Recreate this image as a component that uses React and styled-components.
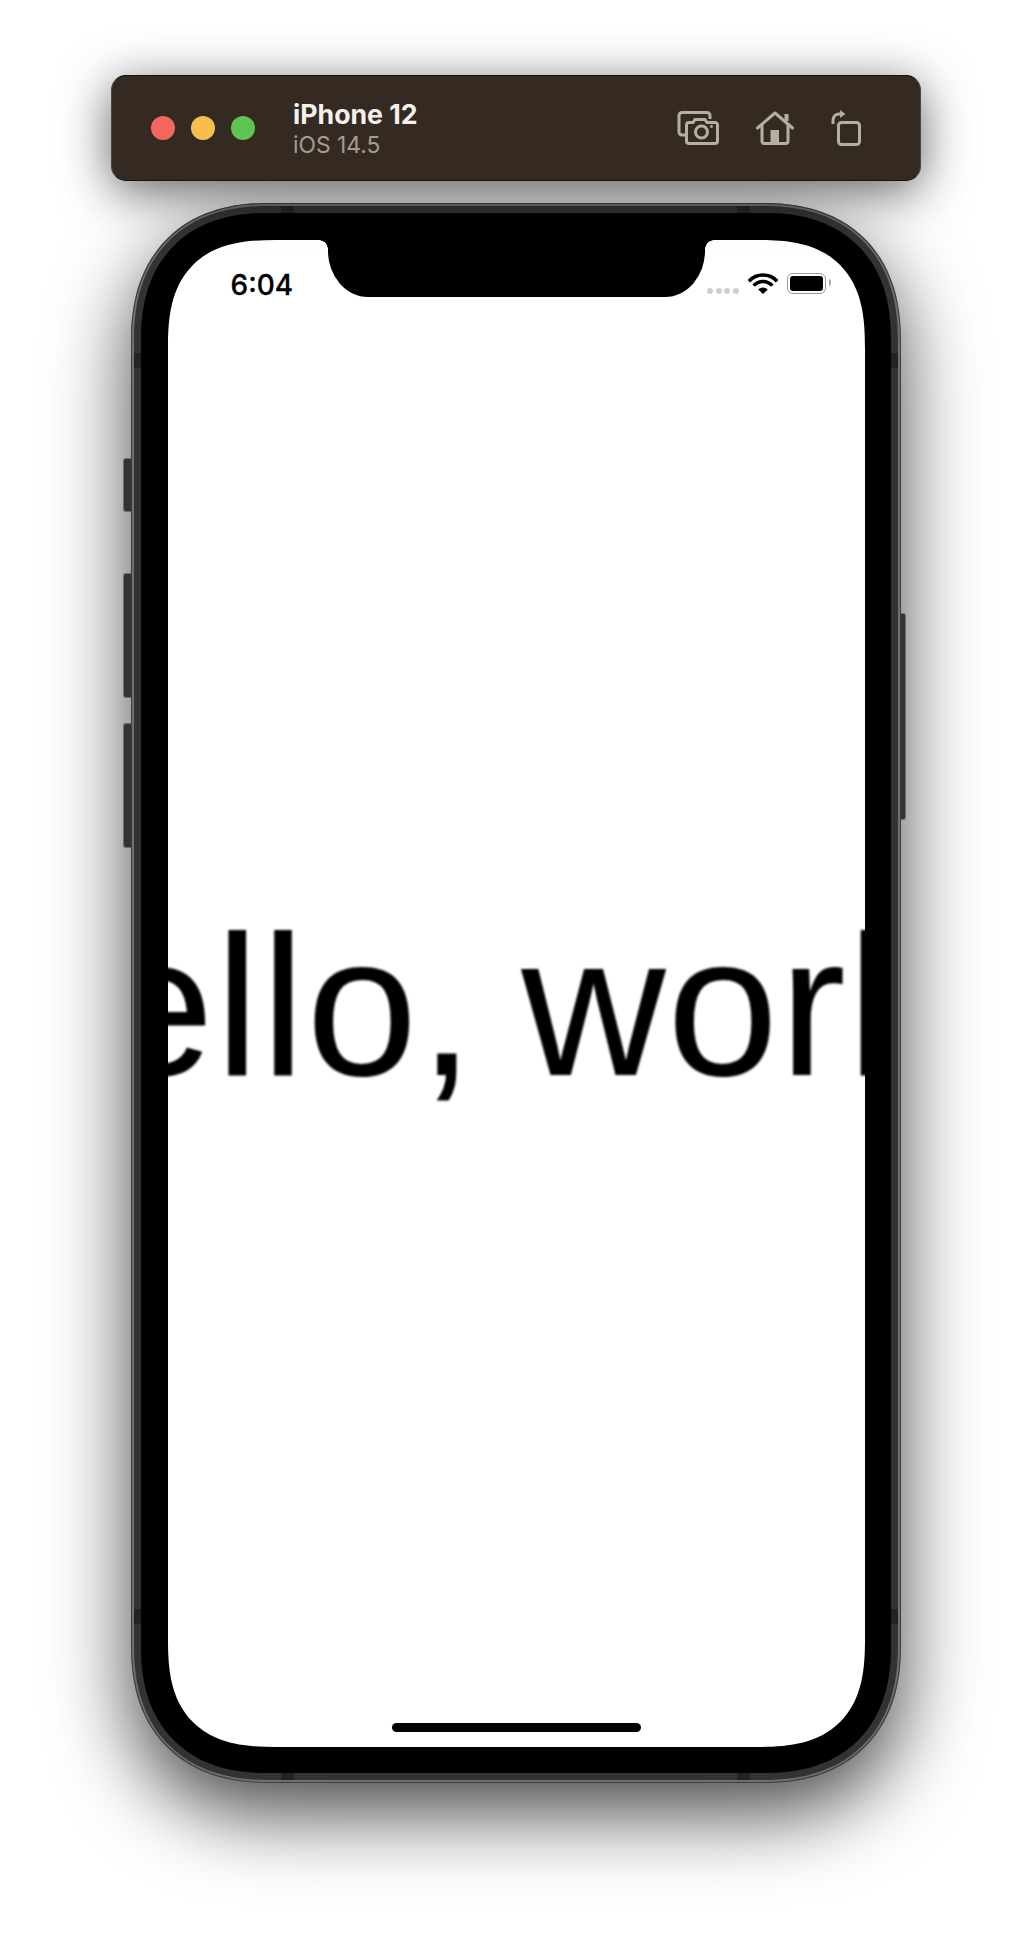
import React from 'react'
import styled, { createGlobalStyle } from 'styled-components'

const GlobalStyle = createGlobalStyle`
	html, body {
		margin: 0;
		padding: 0;
		background: #fff;
	}
`
const Page = styled.div`
	width: 1032px;
	height: 1936px;
	padding-top: 75px;
	box-sizing: border-box;
	display: flex;
	flex-direction: column;
	align-items: center;
	gap: 22px;
	overflow: hidden;
	font-family: Inter, "Liberation Sans", sans-serif;
`
const Toolbar = styled.div`
	width: 810px;
	height: 106px;
	box-sizing: border-box;
	padding: 0 59px 0 39px;
	display: flex;
	align-items: center;
	background: #342a21;
	border: 1px solid #4d463f;
	border-top-color: #15110d;
	border-bottom-color: #15110d;
	border-radius: 15px;
	box-shadow: 0 10px 50px rgba(0, 0, 0, 0.62);
	position: relative;
	z-index: 1;
`
const Lights = styled.div`
	display: flex;
	gap: 16px;
	margin-right: 38px;
`
const Light = styled.span`
	width: 24px;
	height: 24px;
	border-radius: 50%;
	background: ${p => p.color};
`
const Device = styled.div`
	flex: 1;
	display: flex;
	flex-direction: column;
	gap: 2px;
`
const DeviceName = styled.div`
	font-size: 26.7px;
	line-height: 32px;
	font-weight: 700;
	color: #f3f1ef;
`
const DeviceOs = styled.div`
	font-size: 22.8px;
	line-height: 26px;
	color: #a49c93;
`
const Actions = styled.div`
	display: flex;
	align-items: center;
	gap: 37px;
	color: #b6aea4;
`
const Phone = styled.div`
	position: relative;
	width: 770px;
	height: 1580px;
	flex: none;
	box-sizing: border-box;
	padding: 3px;
	background: #6f6f72;
	border-radius: 138px;
	corner-shape: superellipse(1.2);
	box-shadow: 0 30px 80px rgba(0, 0, 0, 0.72), inset 0 0 0 1px #3f3f3f;
`
const Band = styled.div`
	position: relative;
	height: 100%;
	box-sizing: border-box;
	padding: 7px;
	background: #333;
	border-radius: 134px;
	corner-shape: superellipse(1.2);
`
const Bezel = styled.div`
	height: 100%;
	box-sizing: border-box;
	padding: 26.5px;
	background: #000;
	border-radius: 126px;
	corner-shape: superellipse(1.2);
`
const Screen = styled.div`
	position: relative;
	height: 100%;
	display: flex;
	flex-direction: column;
	background: #fff;
	border-radius: 108px;
	corner-shape: superellipse(1.4);
	overflow: hidden;
`
const Notch = styled.div`
	position: absolute;
	top: 0;
	left: 160px;
	width: 377px;
	height: 57px;
	background: #000;
	border-radius: 0 0 40px 40px / 0 0 46px 46px;
	&::before, &::after {
		content: '';
		position: absolute;
		top: 0;
		width: 9px;
		height: 9px;
	}
	&::before {
		left: -9px;
		background: radial-gradient(circle at 0 100%, transparent 8.5px, #000 9px);
	}
	&::after {
		right: -9px;
		background: radial-gradient(circle at 100% 100%, transparent 8.5px, #000 9px);
	}
`
const StatusBar = styled.div`
	height: 88px;
	flex: none;
	box-sizing: border-box;
	padding: 0 39px 0 63px;
	display: flex;
	align-items: center;
`
const Time = styled.div`
	flex: 1;
	padding-top: 2px;
	font-size: 28px;
	font-weight: 500;
	-webkit-text-stroke: 0.3px #000;
	color: #000;
`
const Signal = styled.div`
	display: flex;
	gap: 2.4px;
	margin: 15px 9px 0 0;
`
const SignalDot = styled.span`
	width: 6px;
	height: 6px;
	border-radius: 50%;
	background: #cfcfcf;
`
const Battery = styled.div`
	width: 39px;
	height: 21px;
	margin-left: 9px;
	box-sizing: border-box;
	padding: 2px;
	border: 1.5px solid #999;
	border-radius: 6px;
	position: relative;
	&::after {
		content: '';
		position: absolute;
		right: -6px;
		top: 5px;
		width: 2px;
		height: 7px;
		border-radius: 0 2px 2px 0;
		background: #aaa;
	}
`
const BatteryFill = styled.div`
	height: 100%;
	background: #000;
	border-radius: 3px;
`
const Message = styled.div`
	flex: 1;
	display: flex;
	align-items: center;
	justify-content: center;
	padding: 0 13px 38px 0;
	overflow: hidden;
`
const Hello = styled.div`
	flex: none;
	font-family: "Liberation Sans", Arial, sans-serif;
	font-size: 200px;
	letter-spacing: 1.2px;
	word-spacing: -11px;
	white-space: nowrap;
	color: #000;
	filter: blur(0.9px);
`
const HomeBar = styled.div`
	flex: none;
	width: 249px;
	height: 9px;
	margin: 0 auto 15px;
	border-radius: 5px;
	background: #000;
`
const SideButton = styled.div`
	position: absolute;
	top: ${p => p.top}px;
	height: ${p => p.h}px;
	width: ${p => (p.right ? 5 : 8)}px;
	${p => (p.right ? 'right: -5px;' : 'left: -8px;')}
	background: #333;
	border: 1px solid #6f6f72;
	border-${p => (p.right ? 'left' : 'right')}: none;
	box-sizing: border-box;
	border-radius: ${p => (p.right ? '0 3px 3px 0' : '3px 0 0 3px')};
`
const AntennaH = styled.div`
	position: absolute;
	width: 13px;
	height: 7px;
	left: ${p => p.left}px;
	${p => (p.bottom ? 'bottom: 0;' : 'top: 0;')}
	background: #232323;
`
const AntennaV = styled.div`
	position: absolute;
	width: 7px;
	height: 15px;
	top: ${p => p.top}px;
	${p => (p.right ? 'right: 0;' : 'left: 0;')}
	background: #232323;
`

const CameraIcon = () => (
	<svg width="42" height="34" viewBox="0 0 42 34" fill="none" stroke="currentColor" strokeWidth="3">
		<path d="M33 8V4.5A3 3 0 0 0 30 1.5H5A3 3 0 0 0 2 4.5V21A3 3 0 0 0 5 24H8" />
		<path d="M12 11.5H16L18 8.5H28L30 11.5H38A2.5 2.5 0 0 1 40.5 14V30A2.5 2.5 0 0 1 38 32.5H12A2.5 2.5 0 0 1 9.5 30V14A2.5 2.5 0 0 1 12 11.5Z" />
		<circle cx="24.5" cy="21" r="6" />
		<circle cx="34.5" cy="15.5" r="1.4" fill="currentColor" stroke="none" />
	</svg>
)
const HomeIcon = () => (
	<svg width="38" height="34" viewBox="0 0 38 34" fill="none" stroke="currentColor" strokeWidth="3">
		<path d="M1.5 17L19 2L36.5 17" strokeLinecap="round" strokeLinejoin="round" />
		<path d="M30.5 10V3" strokeWidth="4" />
		<path d="M6 13V30A2.5 2.5 0 0 0 8.5 32.5H29.5A2.5 2.5 0 0 0 32 30V13" />
		<rect x="14.5" y="19" width="8.5" height="14" fill="currentColor" stroke="none" />
	</svg>
)
const RotateIcon = () => (
	<svg width="30" height="36" viewBox="0 0 30 36" fill="none" stroke="currentColor" strokeWidth="3">
		<rect x="7.5" y="12.5" width="21" height="22" rx="3" />
		<path d="M2 14V10A6 6 0 0 1 8 4H10" />
		<path d="M9 0L14.5 4L9 8Z" fill="currentColor" stroke="none" />
	</svg>
)
const WifiIcon = () => (
	<svg width="30" height="21" viewBox="0 0 30 21" fill="none" stroke="#000" strokeWidth="3.6">
		<path d="M0.9 8.3A19 19 0 0 1 29.1 8.3" />
		<path d="M5.7 12.6A12.5 12.5 0 0 1 24.3 12.6" />
		<path d="M15 21L10.2 16.6A6.5 6.5 0 0 1 19.8 16.6Z" fill="#000" stroke="none" />
	</svg>
)

const App = () => {
	return (
		<Page>
			<GlobalStyle />
			<Toolbar>
				<Lights>
					<Light color="#f2685f" />
					<Light color="#f6bd4f" />
					<Light color="#5ec454" />
				</Lights>
				<Device>
					<DeviceName>iPhone 12</DeviceName>
					<DeviceOs>iOS 14.5</DeviceOs>
				</Device>
				<Actions>
					<CameraIcon />
					<HomeIcon />
					<RotateIcon />
				</Actions>
			</Toolbar>
			<Phone>
				<SideButton top={255} h={54} />
				<SideButton top={370} h={125} />
				<SideButton top={520} h={125} />
				<SideButton right top={410} h={207} />
				<Band>
					<AntennaH left={147} />
					<AntennaH left={603} />
					<AntennaH left={147} bottom />
					<AntennaH left={603} bottom />
					<AntennaV top={147} />
					<AntennaV top={147} right />
					<AntennaV top={1403} />
					<AntennaV top={1403} right />
					<Bezel>
						<Screen>
							<Notch />
							<StatusBar>
								<Time>6:04</Time>
								<Signal>
									<SignalDot />
									<SignalDot />
									<SignalDot />
									<SignalDot />
								</Signal>
								<WifiIcon />
								<Battery>
									<BatteryFill />
								</Battery>
							</StatusBar>
							<Message>
								<Hello>Hello, world!</Hello>
							</Message>
							<HomeBar />
						</Screen>
					</Bezel>
				</Band>
			</Phone>
		</Page>
	)
}

export default App
